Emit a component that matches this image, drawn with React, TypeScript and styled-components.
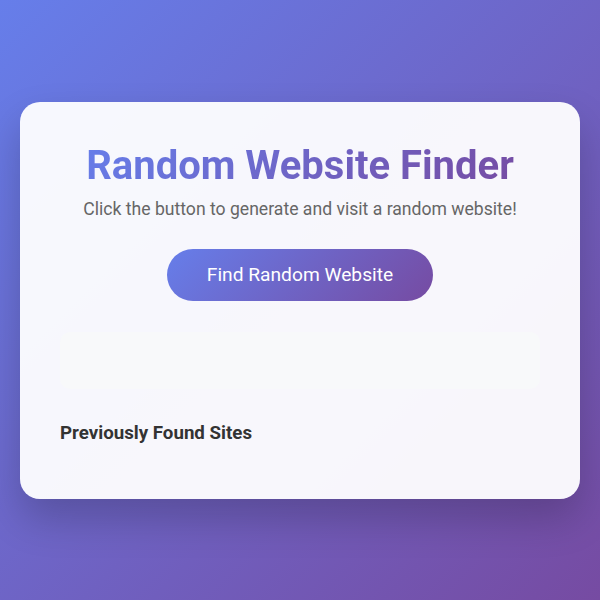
import React from "react";
import styled, { createGlobalStyle } from "styled-components";

const Global = createGlobalStyle`
  html, body { margin: 0; padding: 0; }
  body {
    font-family: Roboto, "Noto Sans", Arial, sans-serif;
    background: linear-gradient(135deg, #667eea 0%, #764ba2 100%);
    min-height: 100vh;
  }
  * { box-sizing: border-box; }
`;

const Page = styled.div`
  min-height: 100vh;
  display: flex;
  align-items: center;
  justify-content: center;
  padding: 20px;
`;

const Card = styled.div`
  width: 560px;
  background: rgba(255, 255, 255, 0.95);
  border-radius: 20px;
  padding: 40px;
  box-shadow: 0 20px 40px rgba(0, 0, 0, 0.2);
  text-align: center;
`;

const Title = styled.h1`
  margin: 0 0 10px;
  font-size: 40px;
  font-weight: 700;
  line-height: 47px;
  background: linear-gradient(135deg, #667eea 0%, #764ba2 100%);
  -webkit-background-clip: text;
  background-clip: text;
  color: transparent;
  display: inline-block;
`;

const Subtitle = styled.p`
  margin: 0 0 29px;
  font-size: 17.6px;
  line-height: 21px;
  color: #666;
`;

const FindButton = styled.button`
  font-family: inherit;
  font-size: 19.2px;
  line-height: 22px;
  color: #fff;
  border: none;
  border-radius: 50px;
  padding: 15px 40px;
  background: linear-gradient(135deg, #667eea 0%, #764ba2 100%);
  cursor: pointer;
`;

const Result = styled.div`
  margin-top: 31px;
  height: 57px;
  border-radius: 10px;
  background: #f8f9fa;
`;

const History = styled.div`
  margin-top: 33px;
  text-align: left;
`;

const HistoryTitle = styled.h3`
  margin: 0 0 15px;
  font-size: 18.72px;
  line-height: 22px;
  font-weight: 700;
  color: #333;
`;

export default function App() {
  return (
    <>
      <Global />
      <Page>
        <Card>
          <Title>Random Website Finder</Title>
          <Subtitle>Click the button to generate and visit a random website!</Subtitle>
          <FindButton>Find Random Website</FindButton>
          <Result />
          <History>
            <HistoryTitle>Previously Found Sites</HistoryTitle>
          </History>
        </Card>
      </Page>
    </>
  );
}
